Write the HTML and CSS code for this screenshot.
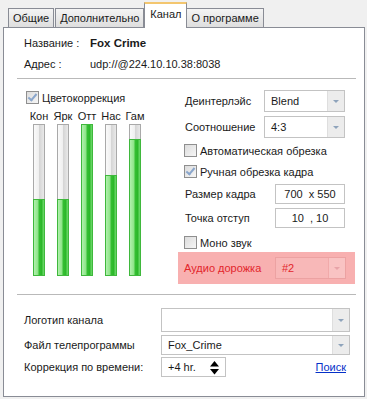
FILE: index.html
```html
<!DOCTYPE html>
<html lang="ru">
<head>
    <meta charset="UTF-8">
    <title>Канал</title>
    <link rel="stylesheet" href="styles.css">
</head>
<body>
    <div class="window">
        <!-- Tabs -->
        <div class="tabs">
            <div class="tab">Общие</div>
            <div class="tab">Дополнительно</div>
            <div class="tab active">Канал</div>
            <div class="tab">О программе</div>
        </div>

        <div class="panel">
            <!-- Channel info -->
            <div class="info">
                <div class="info-row"><span class="info-label">Название :</span><b>Fox Crime</b></div>
                <div class="info-row"><span class="info-label">Адрес :</span><span>udp://@224.10.10.38:8038</span></div>
            </div>
            <div class="sep"></div>

            <div class="middle">
                <!-- Color correction -->
                <div class="color">
                    <div class="check"><span class="box checked"></span>Цветокоррекция</div>
                    <div class="sliders">
                        <div class="slider"><span class="slider-name">Кон</span><div class="track"><div class="fill" style="height: 50%"></div></div></div>
                        <div class="slider"><span class="slider-name">Ярк</span><div class="track"><div class="fill" style="height: 50%"></div></div></div>
                        <div class="slider"><span class="slider-name">Отт</span><div class="track"><div class="fill" style="height: 100%"></div></div></div>
                        <div class="slider"><span class="slider-name">Нас</span><div class="track"><div class="fill" style="height: 66%"></div></div></div>
                        <div class="slider"><span class="slider-name">Гам</span><div class="track"><div class="fill" style="height: 90%"></div></div></div>
                    </div>
                </div>

                <!-- Video / audio settings -->
                <div class="settings">
                    <div class="row row-first">
                        <span class="row-label">Деинтерлэйс</span>
                        <div class="select wide">Blend<span class="arrow"></span></div>
                    </div>
                    <div class="row row-second">
                        <span class="row-label">Соотношение</span>
                        <div class="select wide">4:3<span class="arrow"></span></div>
                    </div>
                    <div class="check check-auto"><span class="box"></span>Автоматическая обрезка</div>
                    <div class="check check-manual"><span class="box checked"></span>Ручная обрезка кадра</div>
                    <div class="row row-size">
                        <span class="row-label">Размер кадра</span>
                        <div class="input">700&nbsp; x 550</div>
                    </div>
                    <div class="row row-offset">
                        <span class="row-label">Точка отступ</span>
                        <div class="input">10 &nbsp;, 10</div>
                    </div>
                    <div class="check check-mono"><span class="box"></span>Моно звук</div>
                    <div class="audio">
                        <span class="row-label">Аудио дорожка</span>
                        <div class="select narrow">#2<span class="arrow"></span></div>
                    </div>
                </div>
            </div>
            <div class="sep"></div>

            <!-- Logo / EPG -->
            <div class="bottom">
                <div class="brow brow-logo">
                    <span class="brow-label">Логотип канала</span>
                    <div class="select long tall"><span class="arrow"></span></div>
                </div>
                <div class="brow brow-epg">
                    <span class="brow-label">Файл телепрограммы</span>
                    <div class="select long">Fox_Crime<span class="arrow"></span></div>
                </div>
                <div class="brow brow-time">
                    <span class="brow-label">Коррекция по времени:</span>
                    <div class="spin">+4 hr.
                        <svg class="spin-icon" width="9" height="14" viewBox="0 0 9 14">
                            <path d="M4.5 0 L9 5.5 L0 5.5 Z" fill="#000"/>
                            <path d="M0 8 L9 8 L4.5 13.5 Z" fill="#000"/>
                        </svg>
                    </div>
                    <a class="link" href="#">Поиск</a>
                </div>
            </div>
        </div>
    </div>
</body>
</html>
```

FILE: styles.css
```css
/* Basic styling */
body {
    margin: 0;
    background-color: #f0f0f0;
    font-family: "Liberation Sans", Arial, sans-serif;
    font-size: 11px;
    color: #1a1a1a;
}
.window {
    padding: 3px 3px 0 3px;
    width: 362px;
}

/* Tabs */
.tabs {
    display: flex;
    align-items: flex-end;
    height: 24px;
    padding-left: 5px;
}
.tab {
    height: 18px;
    line-height: 18px;
    padding: 0 4px;
    margin-right: 1px;
    border: 1px solid #898c95;
    border-bottom: none;
    background: linear-gradient(#f4f4f4, #e9e9e9 50%, #dedede);
}
.tab.active {
    position: relative;
    z-index: 1;
    height: 24px;
    line-height: 21px;
    padding: 0 5px;
    margin: 0 -1px -1px -1px;
    background: #fff;
    border-top: 2px solid #f3c66f;
}
.panel {
    height: 368px;
    background-color: #fff;
    border: 1px solid #898c95;
}

/* Channel info */
.info {
    padding: 4px 0 0 20px;
}
.info-row {
    display: flex;
    align-items: center;
    height: 21px;
}
.info-label {
    width: 66px;
}
.info-row b {
    font-size: 11.5px;
}
.sep {
    height: 1px;
    margin: 4px 8px 0 13px;
    background-color: #b9b9b9;
}

/* Middle area */
.middle {
    display: flex;
    height: 211px;
}
.color {
    width: 152px;
    padding: 12px 0 0 22px;
}
.check {
    display: flex;
    align-items: center;
    height: 13px;
    white-space: nowrap;
}
.box {
    width: 11px;
    height: 11px;
    margin-right: 3px;
    border: 1px solid #8f8f8f;
    background: linear-gradient(135deg, #dcdcdc, #f6f6f6);
    position: relative;
    flex: none;
}
.box.checked::after {
    content: "";
    position: absolute;
    left: 3px;
    top: 0;
    width: 3px;
    height: 7px;
    border: solid #8aa6cc;
    border-width: 0 2px 2px 0;
    transform: rotate(40deg);
}
.sliders {
    display: flex;
    margin: 5px 0 0 1px;
}
.slider {
    width: 24px;
    display: flex;
    flex-direction: column;
    align-items: center;
}
.slider-name {
    height: 14px;
    line-height: 14px;
    margin-bottom: 1px;
    white-space: nowrap;
}
.track {
    width: 10px;
    height: 150px;
    border: 1px solid #a9a9a9;
    background: linear-gradient(to right, #fafafa, #f0f0f0 45%, #d6d6d6 55%, #e9e9e9);
    display: flex;
    align-items: flex-end;
}
.fill {
    width: 10px;
    margin: 0 -1px -1px -1px;
    border: 1px solid #3fb83c;
    background: linear-gradient(to right, #b2f0ae, #8ce486 40%, #36bf33 50%, #2cb82a 75%, #72dc6f);
}

/* Settings column */
.settings {
    width: 177px;
}
.row {
    display: flex;
    align-items: center;
    height: 22px;
    padding: 0 10px 0 7px;
}
.row-label {
    flex: 1;
    white-space: nowrap;
}
.row-first { margin-top: 11px; }
.row-second { margin-top: 4px; }
.row-size, .row-offset { height: 20px; }
.row-size { margin-top: 6px; }
.row-offset { margin-top: 4px; }
.check-auto, .check-manual, .check-mono {
    padding-left: 6px;
}
.check-auto { margin-top: 6px; }
.check-manual { margin-top: 8px; }
.check-mono { margin-top: 8px; }

.select {
    position: relative;
    display: flex;
    align-items: center;
    height: 20px;
    padding-left: 6px;
    border: 1px solid #c3c3c3;
    background-color: #fff;
    box-sizing: border-box;
}
.select.wide { width: 81px; height: 22px; }
.select.narrow { width: 71px; height: 22px; }
.select.long { width: 189px; }
.select.tall { height: 24px; }
.arrow {
    position: absolute;
    top: 0;
    right: 0;
    bottom: 0;
    width: 16px;
    background-color: #ececec;
    border-left: 1px solid #dedede;
}
.arrow::after {
    content: "";
    position: absolute;
    left: 5px;
    top: 50%;
    margin-top: -1px;
    border-left: 3px solid transparent;
    border-right: 3px solid transparent;
    border-top: 3px solid #8ea3bb;
}
.input {
    width: 70px;
    height: 20px;
    line-height: 18px;
    text-align: center;
    border: 1px solid #c3c3c3;
    box-sizing: border-box;
}
.audio {
    display: flex;
    align-items: center;
    height: 32px;
    margin-top: 3px;
    padding: 0 9px 0 6px;
    background-color: #f8b0b0;
    color: #e3262c;
}
.audio .select {
    background-color: #f8b8b8;
    border-color: #eca2a2;
}
.audio .arrow {
    background-color: #f9c3c3;
    border-left-color: #f1aaaa;
}
.audio .arrow::after {
    border-top-color: #e7a3a8;
}

/* Bottom rows */
.bottom {
    padding: 0 14px 0 20px;
}
.brow {
    display: flex;
    align-items: center;
}
.brow-label {
    width: 137px;
    white-space: nowrap;
}
.brow-logo { margin-top: 13px; }
.brow-epg { margin-top: 3px; }
.brow-time { margin-top: 2px; }
.spin {
    position: relative;
    display: flex;
    align-items: center;
    width: 65px;
    height: 20px;
    padding-left: 6px;
    border: 1px solid #c3c3c3;
    box-sizing: border-box;
}
.spin-icon {
    position: absolute;
    right: 6px;
    top: 3px;
}
.link {
    margin-left: auto;
    margin-right: 4px;
    color: #0530c8;
}
```
